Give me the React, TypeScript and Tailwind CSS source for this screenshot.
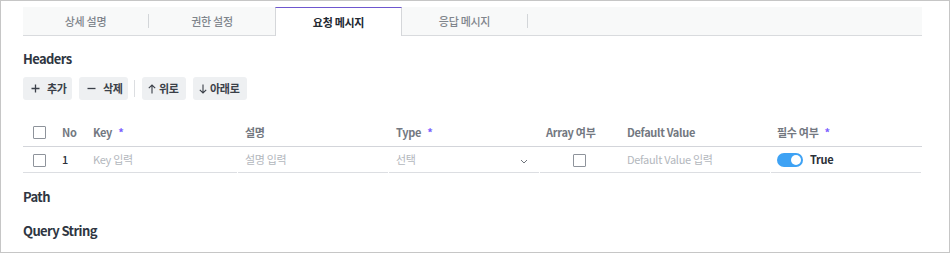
import React from "react";

const font = { fontFamily: '"Noto Sans CJK KR", "Noto Sans", sans-serif' };

function Box({ className = "" }: { className?: string }) {
  return <div className={`w-[13px] h-[13px] border-[1.5px] border-[#8e939b] rounded-[1px] bg-white ${className}`} />;
}

function Star() {
  return <span className="text-[#7b61ff] ml-[6px]">*</span>;
}

export default function App() {
  return (
    <div className="w-[950px] h-[253px] bg-white border border-[#c6c6c6] overflow-hidden tracking-[-0.3px]" style={font}>
      <div className="pt-[6px] pl-[22px] pr-[27px] flex flex-col">
        {/* Tabs */}
        <div className="flex h-[29px] bg-[#f8f9f9] border-b border-[#d9dbde] text-[11px]">
          <div className="w-[125px] flex items-center justify-center text-[#80858c] font-medium">상세 설명</div>
          <div className="w-px h-[14px] bg-[#d3d6d9] self-center" />
          <div className="w-[126px] flex items-center justify-center text-[#80858c] font-medium">권한 설정</div>
          <div className="w-[127px] -mb-px bg-white border-t border-t-[#6e56cf] border-x border-x-[#d5d7da] flex items-center justify-center text-[#222831] font-bold">요청 메시지</div>
          <div className="w-[125px] flex items-center justify-center text-[#80858c] font-medium">응답 메시지</div>
          <div className="w-px h-[14px] bg-[#d3d6d9] self-center" />
          <div className="flex-1" />
        </div>

        {/* Headers */}
        <div className="mt-[13px] h-[20px] leading-[20px] text-[13px] tracking-[-0.6px] font-bold text-[#2f3642]">Headers</div>

        <div className="mt-[8px] flex items-center h-[23px] text-[11px] font-semibold text-[#3a3f48]">
          <button className="h-[23px] w-[49px] rounded-[3px] bg-[#eef0f2] flex items-center pl-[8px]">
            <svg width="9" height="9" viewBox="0 0 9 9" className="mr-[7px]">
              <path d="M4.5 0.5V8.5M0.5 4.5H8.5" stroke="#3a3f48" strokeWidth="1.3" />
            </svg>
            추가
          </button>
          <button className="ml-[7px] h-[23px] w-[49px] rounded-[3px] bg-[#eef0f2] flex items-center pl-[8px]">
            <svg width="9" height="9" viewBox="0 0 9 9" className="mr-[7px]">
              <path d="M0.5 4.5H8.5" stroke="#3a3f48" strokeWidth="1.3" />
            </svg>
            삭제
          </button>
          <div className="ml-[6px] w-px h-[17px] bg-[#dcdee1]" />
          <button className="ml-[7px] h-[23px] w-[44px] rounded-[3px] bg-[#eef0f2] flex items-center pl-[6px]">
            <svg width="8" height="10" viewBox="0 0 8 10" className="mr-[3px]">
              <path d="M4 9.5V1M0.8 4.2L4 1L7.2 4.2" stroke="#3a3f48" strokeWidth="1.1" fill="none" />
            </svg>
            위로
          </button>
          <button className="ml-[7px] h-[23px] w-[54px] rounded-[3px] bg-[#eef0f2] flex items-center pl-[6px]">
            <svg width="8" height="10" viewBox="0 0 8 10" className="mr-[3px]">
              <path d="M4 0.5V9M0.8 5.8L4 9L7.2 5.8" stroke="#3a3f48" strokeWidth="1.1" fill="none" />
            </svg>
            아래로
          </button>
        </div>

        {/* Table header */}
        <div className="mt-[18px] h-[29px] flex items-center border-b border-[#d3d5da] text-[11px] font-semibold text-[#737881]">
          <div className="w-[39px] pl-[10px]"><Box /></div>
          <div className="w-[31px]">No</div>
          <div className="w-[145px]">Key<Star /></div>
          <div className="w-[151px] pl-[7px]">설명</div>
          <div className="w-[151px] pl-[7px]">Type<Star /></div>
          <div className="w-[80px] pl-[6px]">Array 여부</div>
          <div className="w-[151px] pl-[7px]">Default Value</div>
          <div className="w-[151px] pl-[6px]">필수 여부<Star /></div>
        </div>

        {/* Row */}
        <div className="h-[26px] flex gap-px text-[11px]">
          <div className="w-[214px] flex items-center border-b border-[#dcdee2]">
            <div className="w-[39px] pl-[10px] pt-[2px]"><Box /></div>
            <div className="w-[31px] text-[#2b3039] font-medium">1</div>
            <div className="text-[#b3b7bd]">Key 입력</div>
          </div>
          <div className="w-[150px] flex items-center pl-[7px] border-b border-[#dcdee2] text-[#b3b7bd]">설명 입력</div>
          <div className="w-[150px] flex items-center justify-between pl-[7px] pr-[11px] border-b border-[#dcdee2] text-[#b3b7bd]">
            <span>선택</span>
            <svg width="8" height="5" viewBox="0 0 8 5" className="mt-[3px]">
              <path d="M1 1L4 4L7 1" stroke="#6f747c" strokeWidth="1" fill="none" />
            </svg>
          </div>
          <div className="w-[230px] flex items-center border-b border-[#dcdee2]">
            <div className="w-[87px] pl-[33px] pt-[1px]"><Box /></div>
            <div className="text-[#b3b7bd]">Default Value 입력</div>
          </div>
          <div className="w-[150px] flex items-center pl-[6px] border-b border-[#dcdee2]">
            <div className="w-[26px] h-[14px] rounded-full bg-[#3ea2f4] relative">
              <div className="absolute right-[2px] top-[2px] w-[10px] h-[10px] rounded-full bg-white" />
            </div>
            <span className="ml-[7px] font-bold text-[#2b3039]">True</span>
          </div>
        </div>

        <div className="mt-[14px] h-[20px] leading-[20px] text-[13px] tracking-[-0.6px] font-bold text-[#2f3642]">Path</div>
        <div className="mt-[14px] h-[20px] leading-[20px] text-[13px] tracking-[-0.6px] font-bold text-[#2f3642]">Query String</div>
      </div>
    </div>
  );
}
